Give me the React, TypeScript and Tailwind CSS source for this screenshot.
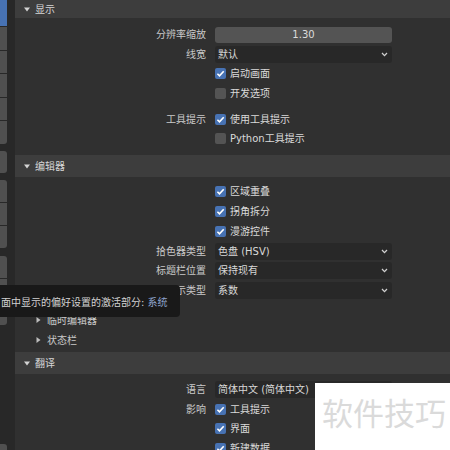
import React from "react";

const font = "font-['DejaVu_Sans','Noto_Sans_CJK_SC',sans-serif]";

function Down() {
  return (
    <svg width="6" height="5" viewBox="0 0 6 5" className="shrink-0">
      <polygon points="0,0.5 6,0.5 3,4.5" fill="#d4d4d4" />
    </svg>
  );
}

function Right() {
  return (
    <svg width="5" height="6" viewBox="0 0 5 6" className="shrink-0">
      <polygon points="0.5,0 4.5,3 0.5,6" fill="#bdbdbd" />
    </svg>
  );
}

function Chevron() {
  return (
    <svg width="7" height="5" viewBox="0 0 7 5" className="shrink-0">
      <polyline points="1,1 3.5,3.6 6,1" fill="none" stroke="#d0d0d0" strokeWidth="1.3" />
    </svg>
  );
}

function Header({ title, h }: { title: string; h: string }) {
  return (
    <div className={`flex items-center bg-[#3d3d3d] pl-[9px] ${h}`}>
      <Down />
      <span className="ml-[5px] text-[10px] text-[#d6d6d6]">{title}</span>
    </div>
  );
}

function Row({ label, h, children }: { label?: string; h: string; children: React.ReactNode }) {
  return (
    <div className={`flex items-center ${h}`}>
      <div className="w-[191px] text-right text-[10px] text-[#c9c9c9] whitespace-nowrap">{label}</div>
      <div className="ml-[9px] w-[177px]">{children}</div>
    </div>
  );
}

function Check({ on, text }: { on: boolean; text: string }) {
  return (
    <div className="flex items-center">
      <div className={`w-[11px] h-[11px] rounded-[2px] flex items-center justify-center ${on ? "bg-[#4772b3]" : "bg-[#545454]"}`}>
        {on && (
          <svg width="11" height="11" viewBox="0 0 11 11">
            <polyline points="2.4,5.8 4.5,7.9 8.7,3.2" fill="none" stroke="#ffffff" strokeWidth="1.6" />
          </svg>
        )}
      </div>
      <span className="ml-[4px] text-[10px] text-[#dadada] whitespace-nowrap">{text}</span>
    </div>
  );
}

function Select({ value }: { value: string }) {
  return (
    <div className="h-[17px] rounded-[3px] bg-[#282828] flex items-center justify-between pl-[3px] pr-[4px]">
      <span className="text-[10px] text-[#d8d8d8] whitespace-nowrap">{value}</span>
      <Chevron />
    </div>
  );
}

function Sub({ title }: { title: string }) {
  return (
    <div className="flex items-center h-[20px] pl-[21px]">
      <Right />
      <span className="ml-[6px] text-[10px] text-[#c9c9c9]">{title}</span>
    </div>
  );
}

function Tab({ h, active }: { h: string; active?: boolean }) {
  return <div className={`${h} ${active ? "bg-[#4772b3]" : "bg-[#505050]"}`} />;
}

export default function App() {
  return (
    <div className={`relative w-[450px] h-[450px] overflow-hidden flex bg-[#303030] ${font}`}>
      <div className="w-[15px] shrink-0 bg-[#282828] flex flex-col">
        <div className="w-[7px] flex flex-col gap-px rounded-br-[3px] overflow-hidden">
          <Tab h="h-[26px]" active />
          <Tab h="h-[22.5px]" />
          <Tab h="h-[22.5px]" />
          <Tab h="h-[22.5px]" />
          <Tab h="h-[22.5px]" />
          <Tab h="h-[22.5px]" />
        </div>
        <div className="w-[7px] mt-[7.5px] flex flex-col rounded-r-[3px] overflow-hidden">
          <Tab h="h-[22px]" />
        </div>
        <div className="w-[7px] mt-[7px] flex flex-col gap-px rounded-r-[3px] overflow-hidden">
          <Tab h="h-[22px]" />
          <Tab h="h-[22px]" />
          <Tab h="h-[22px]" />
        </div>
        <div className="w-[7px] mt-[8px] flex flex-col gap-px rounded-r-[3px] overflow-hidden">
          <Tab h="h-[22.3px]" />
          <Tab h="h-[22.3px]" />
          <Tab h="h-[22.3px]" />
        </div>
        <div className="w-[7px] h-[6px] mt-auto rounded-tr-[3px] bg-[#505050]" />
      </div>

      <div className="flex-1 min-w-0">
        <Header title="显示" h="h-[18px]" />
        <div className="pt-[7px] pb-[6.5px]">
          <Row label="分辨率缩放" h="h-[19.5px]">
            <div className="h-[16px] rounded-[3px] bg-[#545454] flex items-center justify-center text-[10px] text-[#dcdcdc]">1.30</div>
          </Row>
          <Row label="线宽" h="h-[19.5px]">
            <Select value="默认" />
          </Row>
          <Row h="h-[19.5px]">
            <Check on text="启动画面" />
          </Row>
          <Row h="h-[19.5px]">
            <Check on={false} text="开发选项" />
          </Row>
          <div className="h-[6.5px]" />
          <Row label="工具提示" h="h-[19.5px]">
            <Check on text="使用工具提示" />
          </Row>
          <Row h="h-[19.5px]">
            <Check on={false} text="Python工具提示" />
          </Row>
        </div>

        <Header title="编辑器" h="h-[22px]" />
        <div className="pt-[5px]">
          <Row h="h-[19.75px]">
            <Check on text="区域重叠" />
          </Row>
          <Row h="h-[19.75px]">
            <Check on text="拐角拆分" />
          </Row>
          <Row h="h-[19.75px]">
            <Check on text="漫游控件" />
          </Row>
          <Row label="拾色器类型" h="h-[19.75px]">
            <Select value="色盘 (HSV)" />
          </Row>
          <Row label="标题栏位置" h="h-[19.75px]">
            <Select value="保持现有" />
          </Row>
          <Row label="因子显示类型" h="h-[19.75px]">
            <Select value="系数" />
          </Row>
        </div>
        <div className="pt-[9.5px] pb-[2px]">
          <Sub title="临时编辑器" />
          <Sub title="状态栏" />
        </div>

        <Header title="翻译" h="h-[22px]" />
        <div className="pt-[6px]">
          <Row label="语言" h="h-[19.5px]">
            <Select value="简体中文 (简体中文)" />
          </Row>
          <Row label="影响" h="h-[19.5px]">
            <Check on text="工具提示" />
          </Row>
          <Row h="h-[19.5px]">
            <Check on text="界面" />
          </Row>
          <Row h="h-[19.5px]">
            <Check on text="新建数据" />
          </Row>
        </div>
      </div>

      <div className="absolute left-0 top-[285px] w-[180px] h-[32px] bg-[#191919] rounded-r-[4px] flex items-center pl-[1px] pt-[2px] text-[10px] text-[#d2d2d2] whitespace-nowrap">
        面中显示的偏好设置的激活部分:&nbsp;<span className="text-[#8ea3cc]">系统</span>
      </div>

      <div className="absolute left-[315px] top-[383px] w-[135px] h-[67px] bg-white pl-[7px] pt-[13px]">
        <span className="text-[31px] leading-none text-[#dadada] font-['Noto_Sans_CJK_SC',sans-serif] whitespace-nowrap">软件技巧</span>
      </div>
    </div>
  );
}
